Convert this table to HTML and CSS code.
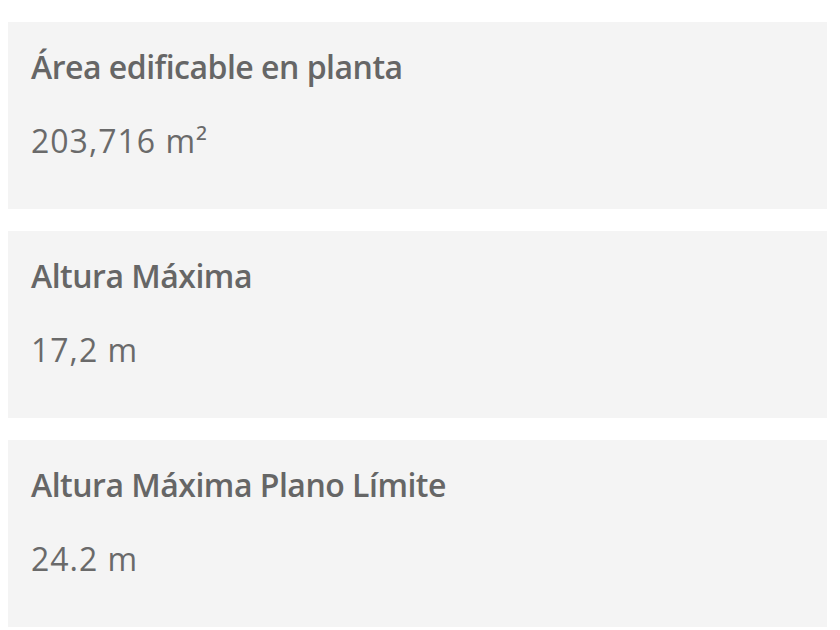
FILE: index.html
```html
<!DOCTYPE html>
<html lang="es">
<head>
<meta charset="utf-8">
<link rel="stylesheet" href="styles.css">
</head>
<body>
<div class="list">
  <section class="card">
    <h3 class="label">Área edificable en planta</h3>
    <p class="value">203,716 m²</p>
  </section>
  <section class="card">
    <h3 class="label">Altura Máxima</h3>
    <p class="value">17,2 m</p>
  </section>
  <section class="card">
    <h3 class="label">Altura Máxima Plano Límite</h3>
    <p class="value">24.2 m</p>
  </section>
</div>
</body>
</html>
```
FILE: styles.css
```css
html, body {
  margin: 0;
  background: #ffffff;
}
body {
  font-family: "Open Sans", "Noto Sans", sans-serif;
  color: #666666;
}
.list {
  display: flex;
  flex-direction: column;
  gap: 22px;
  padding: 22px 13px 0 8px;
}
.card {
  background: #f4f4f4;
  padding: 27px 23px 50px;
}
.label {
  margin: 0;
  font-size: 32px;
  line-height: 36px;
  font-weight: 600;
  letter-spacing: -0.5px;
  color: #666666;
}
.value {
  margin: 38px 0 0;
  font-size: 32px;
  line-height: 36px;
  font-weight: 400;
  letter-spacing: 1px;
  color: #6a6a6a;
}
```
